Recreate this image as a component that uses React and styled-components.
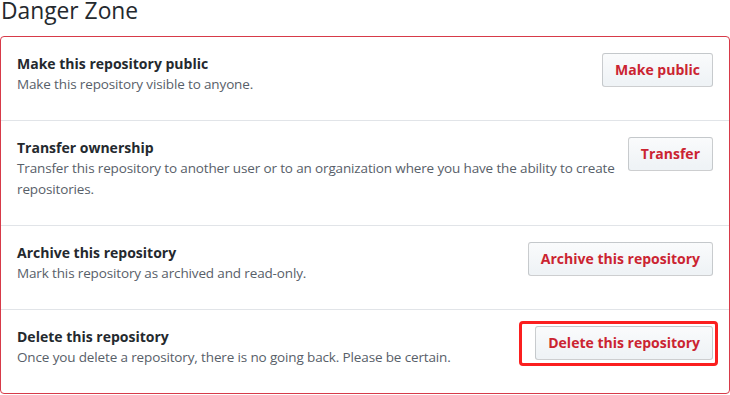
import React from "react";
import styled, { createGlobalStyle } from "styled-components";

const GlobalStyle = createGlobalStyle`
  html, body { margin: 0; padding: 0; background: #fff; }
  body {
    font-family: "Open Sans", "Noto Sans", sans-serif;
    font-size: 14px;
    line-height: 21px;
    color: #24292e;
  }
`;

const Page = styled.div`
  width: 730px;
`;

const Heading = styled.h2`
  margin: 0 0 14px 1px;
  font-size: 22.8px;
  font-weight: 400;
  line-height: 22px;
  color: #24292e;
`;

const Box = styled.ul`
  list-style: none;
  margin: 0;
  padding: 0;
  border: 1px solid #d73a49;
  border-radius: 4px;
`;

const Row = styled.li`
  display: flex;
  align-items: flex-start;
  padding: 16px;
  & + & {
    border-top: 1px solid #e1e4e8;
  }
`;

const Info = styled.div`
  flex: 1;
  min-width: 0;
`;

const Title = styled.strong`
  display: block;
  font-size: 14px;
  font-weight: 700;
  color: #24292e;
`;

const Desc = styled.p`
  margin: 0 0 9px;
  font-size: 13.5px;
  letter-spacing: -0.14px;
  color: #586069;
`;

const Button = styled.button`
  flex: none;
  margin-left: 8px;
  padding: 6px 12px;
  font-family: inherit;
  font-size: 14px;
  font-weight: 700;
  line-height: 20px;
  color: #cb2431;
  background: linear-gradient(-180deg, #fafbfc 0%, #eff3f6 90%);
  border: 1px solid rgba(27, 31, 35, 0.2);
  border-radius: 3px;
  cursor: pointer;
`;

const Highlight = styled.span`
  position: relative;
  flex: none;
  margin-left: 8px;
  display: flex;
  & > ${Button} { margin-left: 0; }
  &::after {
    content: "";
    position: absolute;
    left: -16px;
    right: -5px;
    top: -5px;
    bottom: -6px;
    border: 3px solid #fb1f1f;
    border-radius: 4px;
    pointer-events: none;
  }
`;

const rows = [
  {
    title: "Make this repository public",
    desc: "Make this repository visible to anyone.",
    action: "Make public",
  },
  {
    title: "Transfer ownership",
    desc: "Transfer this repository to another user or to an organization where you have the ability to create repositories.",
    action: "Transfer",
  },
  {
    title: "Archive this repository",
    desc: "Mark this repository as archived and read-only.",
    action: "Archive this repository",
  },
  {
    title: "Delete this repository",
    desc: "Once you delete a repository, there is no going back. Please be certain.",
    action: "Delete this repository",
    highlight: true,
  },
];

export default function App() {
  return (
    <Page>
      <GlobalStyle />
      <Heading>Danger Zone</Heading>
      <Box>
        {rows.map((r) => (
          <Row key={r.title}>
            <Info>
              <Title>{r.title}</Title>
              <Desc>{r.desc}</Desc>
            </Info>
            {r.highlight ? (
              <Highlight>
                <Button type="button">{r.action}</Button>
              </Highlight>
            ) : (
              <Button type="button">{r.action}</Button>
            )}
          </Row>
        ))}
      </Box>
    </Page>
  );
}
